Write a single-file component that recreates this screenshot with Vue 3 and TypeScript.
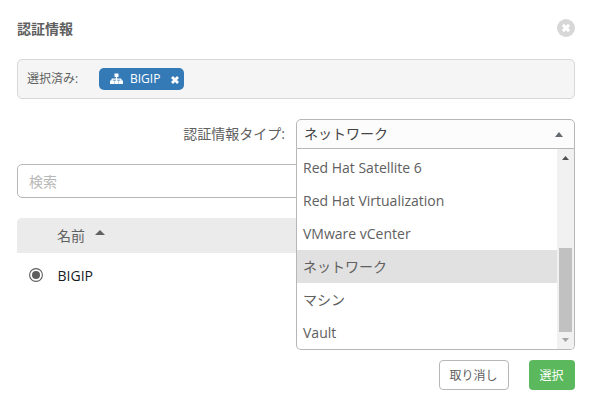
<script setup lang="ts">
import { ref } from 'vue'

const types: string[] = [
  'Red Hat Satellite 6',
  'Red Hat Virtualization',
  'VMware vCenter',
  'ネットワーク',
  'マシン',
  'Vault',
]
const selectedType = ref('ネットワーク')
const credential = ref('BIGIP')
</script>

<template>
  <div class="modal">
    <header class="header">
      <h1 class="title">認証情報</h1>
      <button class="close" aria-label="close">
        <svg viewBox="0 0 18 18" width="18" height="18">
          <circle cx="9" cy="9" r="9" fill="#d7d7d7" />
          <path d="M5.9 5.9l6.2 6.2M12.1 5.9l-6.2 6.2" stroke="#fff" stroke-width="3" />
        </svg>
      </button>
    </header>

    <section class="selected">
      <span class="selected-label">選択済み:</span>
      <span class="tag">
        <svg class="sitemap" viewBox="0 0 13 12" width="13" height="12" fill="#fff">
          <path d="M4.5 0.5h4v3.6H7.1v1.5h3.7q.8 0 .8.8v1.1H13V11H8.8V7.5h1.5V6.8H7.1v.7h1.4V11h-4V7.5h1.4v-.7H2.7v.7h1.5V11H0V7.5h1.4V6.4q0-.8.8-.8h3.7V4.1H4.5z" />
        </svg>
        <span class="tag-name">{{ credential }}</span>
        <svg class="tag-x" viewBox="0 0 8 8" width="8" height="8">
          <path d="M1 1l6 6M7 1l-6 6" stroke="#fff" stroke-width="2.8" />
        </svg>
      </span>
    </section>

    <div class="type-row">
      <label class="type-label">認証情報タイプ:</label>
      <div class="select">
        <div class="select-box">
          <span>{{ selectedType }}</span>
          <svg viewBox="0 0 8 5" width="8" height="5"><path d="M4 0l4 5H0z" fill="#646972" /></svg>
        </div>
        <div class="dropdown">
          <ul class="options">
            <li v-for="t in types" :key="t" :class="{ active: t === selectedType }">{{ t }}</li>
          </ul>
          <div class="scrollbar">
            <svg viewBox="0 0 7 4" width="7" height="4"><path d="M3.5 0L7 4H0z" fill="#505050" /></svg>
            <div class="thumb"></div>
            <svg viewBox="0 0 7 4" width="7" height="4"><path d="M0 0h7L3.5 4z" fill="#a3a3a3" /></svg>
          </div>
        </div>
      </div>
    </div>

    <input class="search" type="text" placeholder="検索" />

    <div class="table-head">
      <span>名前</span>
      <svg viewBox="0 0 10 5" width="10" height="5"><path d="M5 0l5 5H0z" fill="#606060" /></svg>
    </div>
    <div class="table-row">
      <svg class="radio" viewBox="0 0 14 14" width="14" height="14">
        <circle cx="7" cy="7" r="6.4" fill="#fff" stroke="#5e5e5e" stroke-width="1.1" />
        <circle cx="7" cy="7" r="4" fill="#5e5e5e" />
      </svg>
      <span>{{ credential }}</span>
    </div>

    <footer class="footer">
      <button class="btn cancel">取り消し</button>
      <button class="btn confirm">選択</button>
    </footer>
  </div>
</template>

<style>
body {
  background: #fff;
}
</style>

<style scoped>
* {
  box-sizing: border-box;
}
.modal {
  display: flex;
  flex-direction: column;
  height: 406px;
  padding: 18px 16px 16px 17px;
  font: 14px/20px "Open Sans", "Noto Sans CJK JP", sans-serif;
  color: #606060;
}
button {
  font-family: inherit;
  padding: 0;
}
svg {
  display: block;
  flex: none;
}
.header {
  display: flex;
  justify-content: space-between;
  height: 41px;
}
.title {
  margin: 0;
  font-size: 14px;
  line-height: 21px;
  font-weight: 700;
}
.close {
  width: 18px;
  height: 18px;
  margin-top: 1px;
  border: 0;
  background: none;
}
.selected {
  display: flex;
  align-items: center;
  height: 40px;
  padding-left: 9px;
  border: 1px solid #d7d7d7;
  border-radius: 5px;
  background: #f5f5f5;
  font-size: 12px;
}
.selected-label {
  width: 72px;
  white-space: nowrap;
}
.tag {
  display: flex;
  align-items: center;
  width: 85px;
  height: 22px;
  padding-left: 11px;
  border-radius: 5px;
  background: #337ab7;
  color: #fff;
}
.tag-name {
  width: 34px;
  margin: 0 7px 0 7px;
}
.tag-x {
  margin-top: 1px;
}
.type-row {
  display: flex;
  justify-content: flex-end;
  height: 30px;
  margin-top: 20px;
}
.type-label {
  margin-right: 11px;
  line-height: 29px;
}
.select {
  position: relative;
  width: 279px;
}
.select-box {
  display: flex;
  align-items: center;
  justify-content: space-between;
  height: 30px;
  padding: 0 11px 0 7px;
  border: 1px solid #b7b7b7;
  border-radius: 5px 5px 0 0;
  background: #fcfcfc;
  color: #444;
}
.dropdown {
  position: absolute;
  z-index: 2;
  top: 30px;
  left: 0;
  display: flex;
  width: 279px;
  height: 201px;
  border: 1px solid #b7b7b7;
  border-top: 0;
  border-radius: 0 0 5px 5px;
  background: #fff;
  overflow: hidden;
}
.options {
  flex: 1;
  margin: 0;
  padding: 2px 0 0;
  list-style: none;
}
.options li {
  height: 33px;
  padding: 0 6px;
  line-height: 33px;
}
.options .active {
  background: #e1e1e1;
}
.scrollbar {
  display: flex;
  flex-direction: column;
  align-items: center;
  justify-content: space-between;
  width: 17px;
  padding: 7px 0;
  background: #f1f1f1;
}
.thumb {
  width: 13px;
  height: 84px;
  margin: auto 0 6px;
  background: #c1c1c1;
}
.search {
  height: 34px;
  margin: 15px 0 0;
  padding: 0 11px;
  border: 1px solid #b7b7b7;
  border-radius: 5px;
  background: #fff;
  font: inherit;
}
.search::placeholder {
  color: #b7b7b7;
  opacity: 1;
}
.table-head {
  display: flex;
  align-items: center;
  gap: 10px;
  height: 35px;
  margin-top: 20px;
  padding-left: 40px;
  border-radius: 5px 5px 0 0;
  background: #ebebeb;
}
.table-head svg {
  margin-bottom: 6px;
}
.table-row {
  display: flex;
  align-items: center;
  gap: 14.5px;
  height: 46px;
  padding-left: 12px;
  color: #161b1f;
}
.radio {
  margin-bottom: 2px;
}
.footer {
  display: flex;
  justify-content: flex-end;
  gap: 20px;
  margin-top: auto;
}
.btn {
  height: 30px;
  border-radius: 4px;
  font-size: 12px;
}
.cancel {
  width: 70px;
  padding-right: 1px;
  border: 1px solid #b7b7b7;
  background: #fff;
  color: #606060;
}
.confirm {
  width: 46px;
  padding-right: 1px;
  border: 0;
  background: #5cb85c;
  color: #fff;
}
</style>
